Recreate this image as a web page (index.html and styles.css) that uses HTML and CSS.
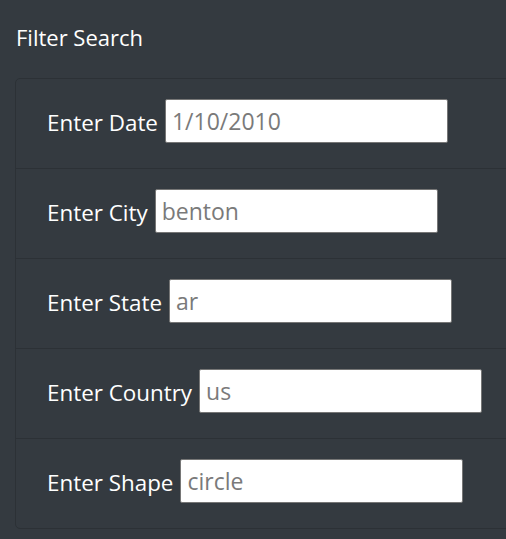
FILE: index.html
```html
<!DOCTYPE html>
<html>
<head>
<meta charset="utf-8">
<link rel="stylesheet" href="styles.css">
</head>
<body>
<div class="page">
  <h5 class="title">Filter Search</h5>
  <ul class="filters">
    <li class="row"><label>Enter Date</label><input class="field" type="text" placeholder="1/10/2010"></li>
    <li class="row"><label>Enter City</label><input class="field" type="text" placeholder="benton"></li>
    <li class="row"><label>Enter State</label><input class="field" type="text" placeholder="ar"></li>
    <li class="row"><label>Enter Country</label><input class="field" type="text" placeholder="us"></li>
    <li class="row"><label>Enter Shape</label><input class="field" type="text" placeholder="circle"></li>
  </ul>
</div>
</body>
</html>
```
FILE: styles.css
```css
html, body {
  margin: 0;
  background: #343a40;
  overflow: hidden;
}
.page {
  width: 540px;
  font-family: "Open Sans", "Noto Sans", sans-serif;
  color: #ffffff;
}
.title {
  margin: 0;
  padding: 22px 0 0 16px;
  height: 78px;
  box-sizing: border-box;
  font-size: 22px;
  font-weight: 400;
  line-height: 30px;
}
.filters {
  list-style: none;
  margin: 0 0 0 15px;
  padding: 0;
  border: 1px solid #2c3136;
  border-radius: 5px;
  width: 520px;
}
.row {
  height: 90px;
  box-sizing: border-box;
  padding: 20px 0 0 31px;
  border-top: 1px solid #2c3136;
  font-size: 22.4px;
  display: flex;
  align-items: flex-start;
}
.row:first-child {
  border-top: none;
  height: 89px;
}
.row label {
  margin-right: 7px;
  line-height: 44px;
  padding-top: 2px;
}
.field {
  width: 283px;
  height: 44px;
  box-sizing: border-box;
  border: 1px solid #767676;
  border-radius: 2px;
  padding: 0 6px;
  font-family: "Open Sans", "Noto Sans", sans-serif;
  font-size: 23px;
  background: #fff;
}
.field::placeholder {
  color: #7a7a7a;
}
```
